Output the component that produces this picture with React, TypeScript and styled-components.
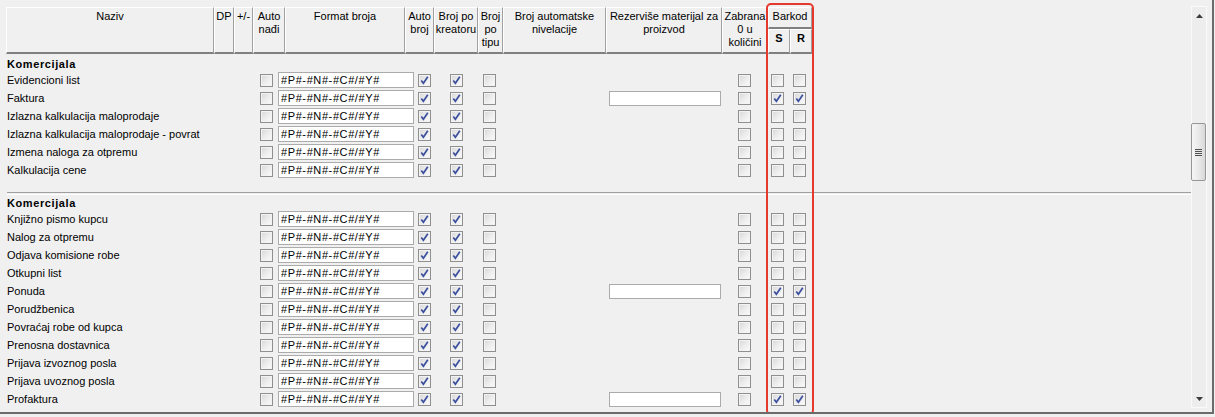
import React from "react";
import styled, { createGlobalStyle } from "styled-components";

const GlobalStyle = createGlobalStyle`
  html, body { margin: 0; padding: 0; background: #f0f0f0; }
  body {
    font-family: "Liberation Sans", Arial, sans-serif;
    font-size: 11px;
    color: #000;
  }
`;

const Window = styled.div`
  position: relative;
  display: flex;
  width: 1214px;
  height: 414px;
  box-sizing: border-box;
  border-right: 2px solid #6b6b6b;
  border-bottom: 2px solid #6b6b6b;
  overflow: hidden;
`;

const Grid = styled.div`
  display: flex;
  flex-direction: column;
  width: 1191px;
  padding: 7px 0 0 6px;
  box-sizing: border-box;
`;

const HeaderRow = styled.div`
  display: flex;
  align-items: flex-start;
  height: 47px;
`;

const HeaderCell = styled.div<{ $w: number; $h?: number; $bold?: boolean }>`
  width: ${({ $w }) => $w}px;
  height: ${({ $h }) => $h ?? 47}px;
  box-sizing: border-box;
  border-top: 1px solid #fff;
  border-left: 1px solid #fff;
  border-right: 1px solid #a0a0a0;
  border-bottom: 2px solid #808080;
  padding-top: 2px;
  text-align: center;
  line-height: 13px;
  font-weight: ${({ $bold }) => ($bold ? "bold" : "normal")};
  white-space: nowrap;
  overflow: hidden;
`;

const HeaderGroup = styled.div`
  display: flex;
  flex-direction: column;
  width: 44px;
`;

const SubRow = styled.div`
  display: flex;
`;

const Section = styled.div<{ $top: number }>`
  padding-top: ${({ $top }) => $top}px;
`;

const SectionTitle = styled.div`
  height: 13px;
  line-height: 13px;
  padding-left: 1px;
  font-weight: bold;
  letter-spacing: 0.6px;
`;

const Separator = styled.div`
  margin: 13px 0 0 1px;
  height: 1px;
  border-top: 1px solid #a0a0a0;
  border-bottom: 1px solid #fff;
`;

const Row = styled.div`
  display: grid;
  grid-template-columns: 254px 18px 140px 32px 33px 126px 129px 33px 22px 13px;
  height: 18px;
  align-items: center;
`;

const Name = styled.div`
  padding-left: 1px;
  line-height: 18px;
  white-space: nowrap;
`;

const Field = styled.input<{ $w: number; $h: number }>`
  width: ${({ $w }) => $w}px;
  height: ${({ $h }) => $h}px;
  box-sizing: border-box;
  margin: 0;
  padding: 0 0 0 2px;
  border: 1px solid #ababab;
  background: #fff;
  font-family: "Liberation Sans", Arial, sans-serif;
  font-size: 11px;
  letter-spacing: 0.6px;
  color: #000;
  outline: none;
`;

const Box = styled.span`
  display: flex;
  align-items: center;
  justify-content: center;
  width: 13px;
  height: 13px;
  box-sizing: border-box;
  border: 1px solid #8f8f8f;
  background: linear-gradient(135deg, #d6d6d6 0%, #ececec 50%, #fbfbfb 100%);
  box-shadow: inset 0 0 0 1px #f3f3f3;
`;

const Scrollbar = styled.div`
  display: flex;
  flex-direction: column;
  width: 16px;
  height: 402px;
  margin-top: 6px;
  box-sizing: border-box;
  border: 1px solid #fafafa;
  background: #ededed;
`;

const ArrowButton = styled.div`
  height: 17px;
  display: flex;
  align-items: center;
  justify-content: center;
`;

const Track = styled.div`
  flex: 1;
`;

const Thumb = styled.div`
  margin: 99px 0 0 -1px;
  width: 15px;
  height: 58px;
  box-sizing: border-box;
  border: 1px solid #979797;
  border-radius: 2px;
  background: linear-gradient(to right, #f6f6f6 0%, #e8e8e8 55%, #d8d8d8 100%);
  display: flex;
  align-items: center;
  justify-content: center;
`;

const Grip = styled.div`
  width: 7px;
  height: 7px;
  background: repeating-linear-gradient(to bottom, #505050 0 1px, #e6e6e6 1px 2px);
`;

const RightGap = styled.div`
  width: 5px;
`;

const Highlight = styled.div`
  position: absolute;
  left: 766px;
  top: 3px;
  width: 48px;
  height: 412px;
  box-sizing: border-box;
  border: 2.5px solid #e5392e;
  border-radius: 5px;
  pointer-events: none;
`;

function Check({ on }: { on?: boolean }) {
  return (
    <Box>
      {on && (
        <svg width="11" height="11" viewBox="0 0 11 11">
          <path d="M2.3 5.4 L4.4 8.3 L8.8 1.8" stroke="#3b4f9e" strokeWidth="1.7" fill="none" />
        </svg>
      )}
    </Box>
  );
}

type Doc = { name: string; extra?: boolean };

const first: Doc[] = [
  { name: "Evidencioni list" },
  { name: "Faktura", extra: true },
  { name: "Izlazna kalkulacija maloprodaje" },
  { name: "Izlazna kalkulacija maloprodaje - povrat" },
  { name: "Izmena naloga za otpremu" },
  { name: "Kalkulacija cene" },
];

const second: Doc[] = [
  { name: "Knjižno pismo kupcu" },
  { name: "Nalog za otpremu" },
  { name: "Odjava komisione robe" },
  { name: "Otkupni list" },
  { name: "Ponuda", extra: true },
  { name: "Porudžbenica" },
  { name: "Povraćaj robe od kupca" },
  { name: "Prenosna dostavnica" },
  { name: "Prijava izvoznog posla" },
  { name: "Prijava uvoznog posla" },
  { name: "Profaktura", extra: true },
];

const headers: { w: number; lines: string[] }[] = [
  { w: 208, lines: ["Naziv"] },
  { w: 20, lines: ["DP"] },
  { w: 19, lines: ["+/-"] },
  { w: 32, lines: ["Auto", "nađi"] },
  { w: 120, lines: ["Format broja"] },
  { w: 29, lines: ["Auto", "broj"] },
  { w: 44, lines: ["Broj po", "kreatoru"] },
  { w: 25, lines: ["Broj", "po", "tipu"] },
  { w: 103, lines: ["Broj automatske", "nivelacije"] },
  { w: 116, lines: ["Rezerviše materijal za", "proizvod"] },
  { w: 46, lines: ["Zabrana", "0 u", "količini"] },
];

function DocRow({ doc }: { doc: Doc }) {
  return (
    <Row>
      <Name>{doc.name}</Name>
      <Check />
      <Field $w={136} $h={16} readOnly defaultValue="#P#-#N#-#C#/#Y#" />
      <Check on />
      <Check on />
      <Check />
      <div>{doc.extra && <Field $w={112} $h={15} readOnly defaultValue="" />}</div>
      <Check />
      <Check on={doc.extra} />
      <Check on={doc.extra} />
    </Row>
  );
}

export default function App() {
  return (
    <>
      <GlobalStyle />
      <Window>
        <Grid>
          <HeaderRow>
            {headers.map((h, i) => (
              <HeaderCell key={i} $w={h.w}>
                {h.lines.map((l, j) => (
                  <div key={j}>{l}</div>
                ))}
              </HeaderCell>
            ))}
            <HeaderGroup>
              <HeaderCell $w={44} $h={22}>Barkod</HeaderCell>
              <SubRow>
                <HeaderCell $w={22} $h={25} $bold>S</HeaderCell>
                <HeaderCell $w={22} $h={25} $bold>R</HeaderCell>
              </SubRow>
            </HeaderGroup>
          </HeaderRow>

          <Section $top={4}>
            <SectionTitle>Komercijala</SectionTitle>
            {first.map((d) => (
              <DocRow key={d.name} doc={d} />
            ))}
          </Section>
          <Separator />
          <Section $top={2}>
            <SectionTitle>Komercijala</SectionTitle>
            {second.map((d) => (
              <DocRow key={d.name} doc={d} />
            ))}
          </Section>
        </Grid>

        <Scrollbar>
          <ArrowButton>
            <svg width="7" height="4" viewBox="0 0 7 4">
              <path d="M0 4 L3.5 0 L7 4 Z" fill="#3c3c3c" />
            </svg>
          </ArrowButton>
          <Track>
            <Thumb>
              <Grip />
            </Thumb>
          </Track>
          <ArrowButton>
            <svg width="7" height="4" viewBox="0 0 7 4">
              <path d="M0 0 L7 0 L3.5 4 Z" fill="#3c3c3c" />
            </svg>
          </ArrowButton>
        </Scrollbar>
        <RightGap />
        <Highlight />
      </Window>
    </>
  );
}
